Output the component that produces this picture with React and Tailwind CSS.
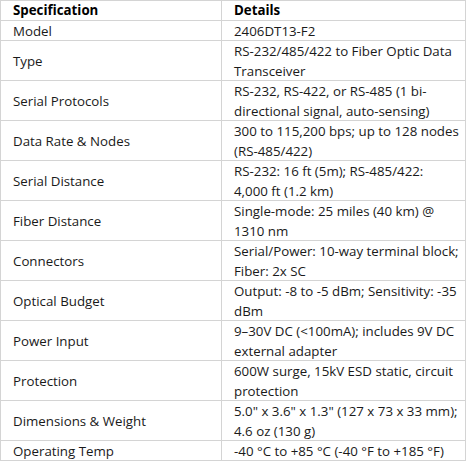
import React from "react";

const rows = [
    ["Model", ["2406DT13-F2"]],
    ["Type", ["RS-232/485/422 to Fiber Optic Data", "Transceiver"]],
    ["Serial Protocols", ["RS-232, RS-422, or RS-485 (1 bi-", "directional signal, auto-sensing)"]],
    ["Data Rate & Nodes", ["300 to 115,200 bps; up to 128 nodes", "(RS-485/422)"]],
    ["Serial Distance", ["RS-232: 16 ft (5m); RS-485/422:", "4,000 ft (1.2 km)"]],
    ["Fiber Distance", ["Single-mode: 25 miles (40 km) @", "1310 nm"]],
    ["Connectors", ["Serial/Power: 10-way terminal block;", "Fiber: 2x SC"]],
    ["Optical Budget", ["Output: -8 to -5 dBm; Sensitivity: -35", "dBm"]],
    ["Power Input", ["9–30V DC (<100mA); includes 9V DC", "external adapter"]],
    ["Protection", ["600W surge, 15kV ESD static, circuit", "protection"]],
    ["Dimensions & Weight", ['5.0" x 3.6" x 1.3" (127 x 73 x 33 mm);', "4.6 oz (130 g)"]],
    ["Operating Temp", ["-40 °C to +85 °C (-40 °F to +185 °F)"]],
];

const App = () => {
    return (
        <div className="w-[466px] bg-white text-[13.3px] leading-[20px] text-[#1a1a1a] font-['Open_Sans',sans-serif]">
            <div className="border-l border-t border-[#d4d4d4]">
                {/* header */}
                <div className="flex">
                    <div className="w-[221px] h-[20px] border-r border-b border-[#d4d4d4] pl-[12px] font-bold text-black leading-[19px]">
                        Specification
                    </div>
                    <div className="w-[244px] h-[20px] border-r border-b border-[#d4d4d4] pl-[12px] font-bold text-black leading-[19px]">
                        Details
                    </div>
                </div>
                {rows.map(([name, lines]) => (
                    <div className="flex" key={name}>
                        <div
                            className={`w-[221px] border-r border-b border-[#d4d4d4] pl-[12px] flex items-center ${
                                lines.length > 1 ? "h-[40px]" : "h-[20px]"
                            }`}
                        >
                            {name}
                        </div>
                        <div
                            className={`w-[244px] border-r border-b border-[#d4d4d4] pl-[12px] whitespace-nowrap overflow-hidden ${
                                lines.length > 1 ? "h-[40px]" : "h-[20px]"
                            }`}
                        >
                            {lines.map((l) => (
                                <div key={l} className="h-[20px] leading-[20px]">{l}</div>
                            ))}
                        </div>
                    </div>
                ))}
            </div>
        </div>
    );
};

export default App;
